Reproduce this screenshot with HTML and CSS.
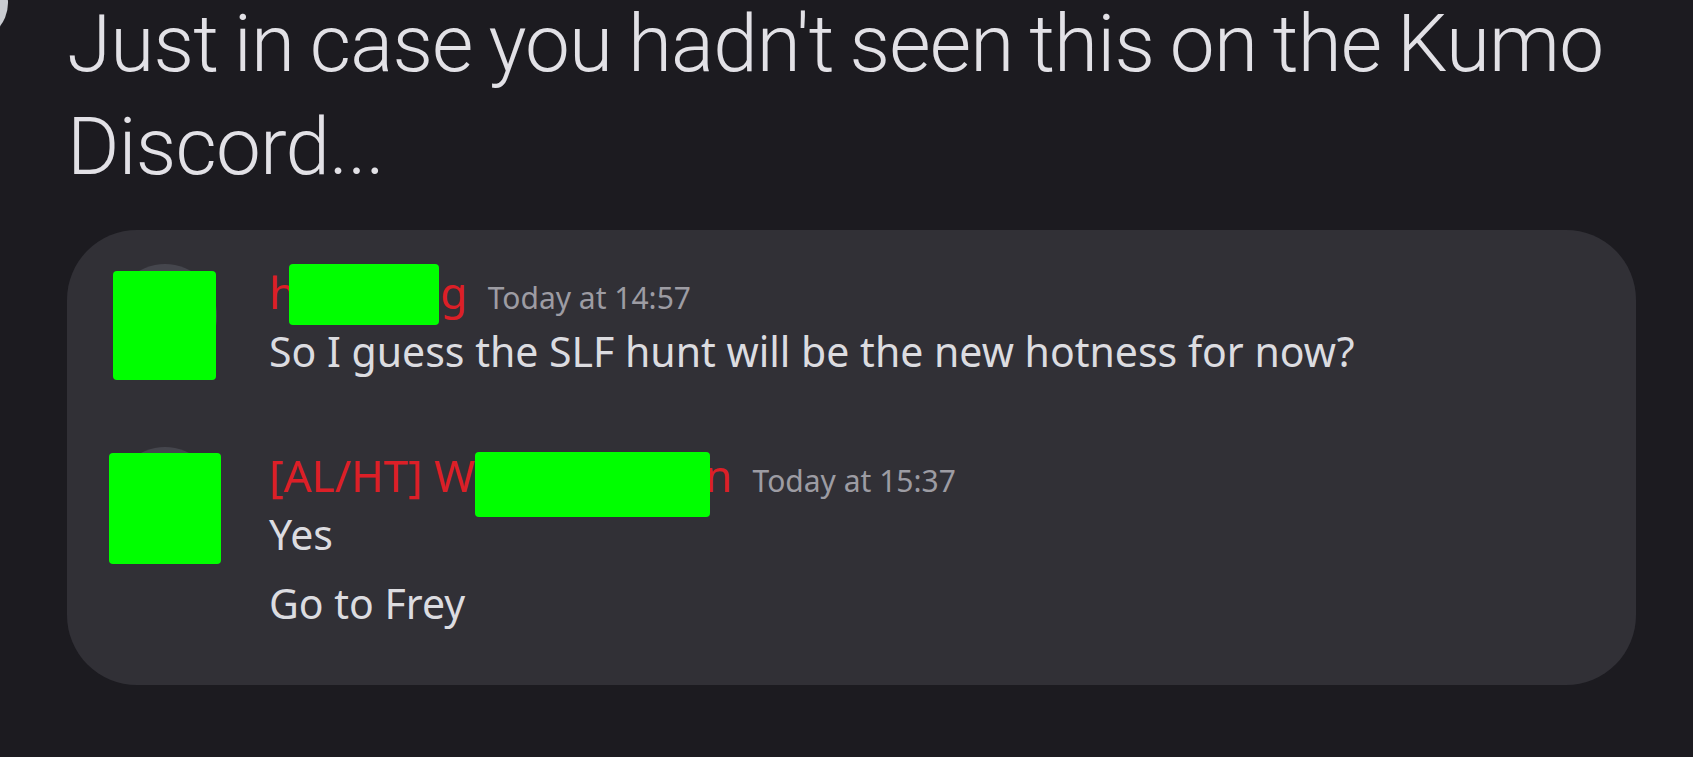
FILE: index.html
```html
<!DOCTYPE html>
<html lang="en">

<head>
  <meta charset="UTF-8">
  <meta name="viewport" content="width=device-width, initial-scale=1.0">
  <title>Kumo Discord</title>
  <link rel="stylesheet" href="styles.css">
</head>

<body>
  <div class="post">
    <div class="op-avatar"></div>
    <p class="post-text">Just in case you hadn't seen this on the Kumo Discord...</p>

    <div class="quote">
      <div class="msg-group">
        <div class="avatar">
          <span class="censor censor-one"></span>
        </div>
        <div class="msg-body">
          <div class="msg-header">
            <span class="name">h<span class="redacted redacted-one"></span>g</span>
            <span class="time">Today at 14:57</span>
          </div>
          <p class="msg">So I guess the SLF hunt will be the new hotness for now?</p>
        </div>
      </div>

      <div class="msg-group">
        <div class="avatar">
          <span class="censor censor-two"></span>
        </div>
        <div class="msg-body">
          <div class="msg-header">
            <span class="name">[AL/HT] W<span class="redacted redacted-two"></span>n</span>
            <span class="time">Today at 15:37</span>
          </div>
          <p class="msg">Yes</p>
          <p class="msg msg-next">Go to Frey</p>
        </div>
      </div>
    </div>
  </div>
</body>

</html>
```

FILE: styles.css
```css
* {
  box-sizing: border-box;
  margin: 0;
  padding: 0;
}

body {
  height: 100vh;
  overflow: hidden;
  background: #1c1b20;
  font-family: 'Noto Sans', sans-serif;
}

.post {
  position: relative;
  padding-left: 67px;
}

/* poster avatar, cut off by the left edge */
.op-avatar {
  position: absolute;
  left: -68px;
  top: -28px;
  width: 76px;
  height: 76px;
  border-radius: 50%;
  background: #c9ccd1;
}

.post-text {
  margin-top: -7px;
  width: 1569px;
  font-family: 'Roboto', sans-serif;
  font-weight: 300;
  font-size: 80px;
  letter-spacing: -0.8px;
  word-spacing: -3px;
  line-height: 103px;
  color: #e2e1e6;
}

.quote {
  margin-top: 31px;
  width: 1569px;
  background: #313036;
  border-radius: 70px;
  padding: 34px 0 54px;
}

.msg-group {
  display: flex;
  padding-left: 46px;
}

.msg-group + .msg-group {
  margin-top: 68px;
}

.avatar {
  position: relative;
  flex-shrink: 0;
  width: 104px;
  height: 104px;
  margin-right: 52px;
  border-radius: 50%;
  background: #45464d;
}

.censor {
  position: absolute;
  background: #00ff00;
  border-radius: 4px;
}

.censor-one {
  top: 7px;
  left: 0;
  width: 103px;
  height: 109px;
}

.censor-two {
  top: 6px;
  left: -4px;
  width: 112px;
  height: 111px;
}

.msg-header {
  font-size: 44px;
  line-height: 56px;
}

.name {
  color: #dc1f27;
}

.redacted {
  position: relative;
  display: inline-block;
}

.redacted::after {
  content: "";
  position: absolute;
  background: #00ff00;
  border-radius: 4px;
}

.redacted-one {
  width: 144px;
}

.redacted-one::after {
  left: -7px;
  right: 1px;
  top: -45px;
  height: 61px;
}

.redacted-two {
  width: 230px;
}

.redacted-two::after {
  left: 0;
  right: -5px;
  top: -40px;
  height: 65px;
}

.time {
  margin-left: 9px;
  font-size: 30px;
  line-height: 1;
  color: #9d9ca3;
}

.msg {
  margin-top: 3px;
  font-size: 41px;
  line-height: 56px;
  color: #dcdce0;
}

.msg-next {
  margin-top: 13px;
}
```
